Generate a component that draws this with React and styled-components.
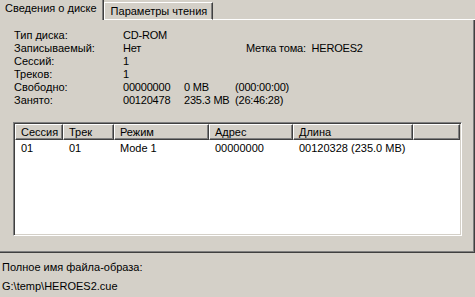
import React from 'react'
import styled, { createGlobalStyle } from 'styled-components'

const GlobalStyle = createGlobalStyle`
  html, body {
    margin: 0;
    padding: 0;
    background: #d4d0c8;
  }
  body {
    font-family: 'Liberation Sans', Arial, sans-serif;
    font-size: 11px;
    color: #000;
  }
`

const info = [
  { label: 'Тип диска:', cells: ['CD-ROM'] },
  { label: 'Записываемый:', cells: ['Нет'], extra: 'Метка тома:  HEROES2' },
  { label: 'Сессий:', cells: ['1'] },
  { label: 'Треков:', cells: ['1'] },
  { label: 'Свободно:', cells: ['00000000', '0 MB', '(000:00:00)'] },
  { label: 'Занято:', cells: ['00120478', '235.3 MB', '(26:46:28)'] },
]

const columns = [
  { title: 'Сессия', width: 48 },
  { title: 'Трек', width: 51 },
  { title: 'Режим', width: 95 },
  { title: 'Адрес', width: 84 },
  { title: 'Длина', width: 120 },
]

const tracks = [['01', '01', 'Mode 1', '00000000', '00120328 (235.0 MB)']]

function App() {
  return (
    <Window>
      <GlobalStyle />
      <TabControl>
        <TabStrip>
          <Tab active>Сведения о диске</Tab>
          <Tab>Параметры чтения</Tab>
          <TabFiller />
        </TabStrip>
        <Panel>
          <InfoList>
            {info.map((row) => (
              <InfoRow key={row.label}>
                <Label>{row.label}</Label>
                {row.cells.map((c, i) => (
                  <Value key={i} width={i === 0 ? 61 : i === 1 ? 51 : 0}>
                    {c}
                  </Value>
                ))}
                {row.extra && (
                  <>
                    <Value width={62} />
                    <Value>{row.extra}</Value>
                  </>
                )}
              </InfoRow>
            ))}
          </InfoList>
          <ListView>
            <HeaderRow>
              {columns.map((col) => (
                <HeaderCell key={col.title} width={col.width}>
                  {col.title}
                </HeaderCell>
              ))}
              <HeaderCell grow />
            </HeaderRow>
            {tracks.map((t, i) => (
              <ItemRow key={i}>
                {t.map((v, j) => (
                  <ItemCell key={j} width={columns[j].width}>
                    {v}
                  </ItemCell>
                ))}
              </ItemRow>
            ))}
          </ListView>
        </Panel>
      </TabControl>
      <Footer>
        <FooterLine>Полное имя файла-образа:</FooterLine>
        <FooterLine>G:\temp\HEROES2.cue</FooterLine>
      </Footer>
    </Window>
  )
}

const Window = styled.div`
  width: 475px;
  height: 297px;
  overflow: hidden;
  display: flex;
  flex-direction: column;
`

const TabControl = styled.div`
  margin-left: -3px;
  width: 478px;
  display: flex;
  flex-direction: column;
`

const TabStrip = styled.div`
  display: flex;
  align-items: flex-end;
  height: 20px;
`

const Tab = styled.div`
  box-sizing: border-box;
  height: ${(p) => (p.active ? '22px' : '18px')};
  margin-top: ${(p) => (p.active ? '-2px' : '0')};
  padding: ${(p) => (p.active ? '3px 6px 0 7px' : '2px 5px 0 6px')};
  border-left: 1px solid #fff;
  border-top: 1px solid #fff;
  border-right: 1px solid #404040;
  border-bottom: ${(p) => (p.active ? 'none' : '1px solid #fff')};
  box-shadow: inset -1px 0 #808080;
  white-space: nowrap;
  line-height: 13px;
`

const TabFiller = styled.div`
  flex: 1;
  border-bottom: 1px solid #fff;
`

const Panel = styled.div`
  box-sizing: border-box;
  height: 233px;
  padding: 9px 0 0 16px;
  border-left: 1px solid #fff;
  border-right: 1px solid #404040;
  border-bottom: 1px solid #404040;
  box-shadow: inset -1px -1px #808080;
  display: flex;
  flex-direction: column;
`

const InfoList = styled.div`
  display: flex;
  flex-direction: column;
`

const InfoRow = styled.div`
  display: flex;
  height: 13px;
  line-height: 13px;
  white-space: nowrap;
`

const Label = styled.span`
  width: 109px;
  flex-shrink: 0;
`

const Value = styled.span`
  ${(p) => (p.width ? `width: ${p.width}px;` : '')}
  flex-shrink: 0;
  white-space: pre;
  letter-spacing: -0.2px;
`

const ListView = styled.div`
  box-sizing: border-box;
  margin: 15px 0 0 -1px;
  width: 449px;
  height: 114px;
  background: #fff;
  border-top: 1px solid #808080;
  border-left: 1px solid #808080;
  border-right: 1px solid #fff;
  border-bottom: 1px solid #fff;
  box-shadow: inset 1px 1px #404040, inset -1px -1px #d4d0c8;
  padding: 1px;
  display: flex;
  flex-direction: column;
`

const HeaderRow = styled.div`
  display: flex;
  height: 16px;
  flex-shrink: 0;
`

const HeaderCell = styled.div`
  box-sizing: border-box;
  ${(p) => (p.grow ? 'flex: 1;' : `width: ${p.width}px; flex-shrink: 0;`)}
  background: #d4d0c8;
  border-top: 1px solid #fff;
  border-left: 1px solid #fff;
  border-right: 1px solid #404040;
  border-bottom: 1px solid #404040;
  box-shadow: inset -1px -1px #808080;
  padding: 1px 0 0 5px;
  line-height: 13px;
  white-space: nowrap;
`

const ItemRow = styled.div`
  display: flex;
  height: 14px;
  line-height: 14px;
  margin-top: 1px;
`

const ItemCell = styled.div`
  width: ${(p) => p.width}px;
  flex-shrink: 0;
  padding-left: 6px;
  box-sizing: border-box;
  white-space: nowrap;
`

const Footer = styled.div`
  display: flex;
  flex-direction: column;
  padding: 8px 0 0 2px;
  gap: 6px;
`

const FooterLine = styled.div`
  line-height: 13px;
  white-space: nowrap;
`

export default App
